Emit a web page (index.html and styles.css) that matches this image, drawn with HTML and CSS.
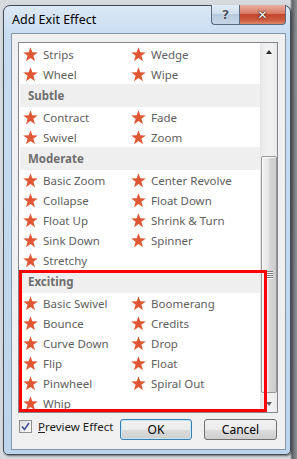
FILE: index.html
```html
<!DOCTYPE html>
<html lang="en">
<head>
    <meta charset="UTF-8">
    <title>Add Exit Effect</title>
    <link rel="stylesheet" href="styles.css">
</head>
<body>
    <svg class="defs" width="0" height="0">
        <symbol id="star" viewBox="0 0 14 14">
            <path d="M7 0.2 L8.7 5.0 L13.8 5.05 L9.7 8.15 L11.2 13.3 L7 10.3 L2.8 13.3 L4.3 8.15 L0.2 5.05 L5.3 5.0 Z"/>
        </symbol>
    </svg>

    <div class="window">
        <div class="titlebar">
            <span class="title">Add Exit Effect</span>
            <div class="caption-buttons">
                <span class="cap-btn help">?</span>
                <span class="cap-btn close">&#x2715;</span>
            </div>
        </div>

        <div class="client">
            <div class="listbox">
                <div class="list">
                    <div class="row">
                        <span class="item"><svg class="star"><use href="#star"/></svg>Strips</span>
                        <span class="item"><svg class="star"><use href="#star"/></svg>Wedge</span>
                    </div>
                    <div class="row">
                        <span class="item"><svg class="star"><use href="#star"/></svg>Wheel</span>
                        <span class="item"><svg class="star"><use href="#star"/></svg>Wipe</span>
                    </div>

                    <div class="group">Subtle</div>
                    <div class="row">
                        <span class="item"><svg class="star"><use href="#star"/></svg>Contract</span>
                        <span class="item"><svg class="star"><use href="#star"/></svg>Fade</span>
                    </div>
                    <div class="row">
                        <span class="item"><svg class="star"><use href="#star"/></svg>Swivel</span>
                        <span class="item"><svg class="star"><use href="#star"/></svg>Zoom</span>
                    </div>

                    <div class="group">Moderate</div>
                    <div class="row">
                        <span class="item"><svg class="star"><use href="#star"/></svg>Basic Zoom</span>
                        <span class="item"><svg class="star"><use href="#star"/></svg>Center Revolve</span>
                    </div>
                    <div class="row">
                        <span class="item"><svg class="star"><use href="#star"/></svg>Collapse</span>
                        <span class="item"><svg class="star"><use href="#star"/></svg>Float Down</span>
                    </div>
                    <div class="row">
                        <span class="item"><svg class="star"><use href="#star"/></svg>Float Up</span>
                        <span class="item"><svg class="star"><use href="#star"/></svg>Shrink &amp; Turn</span>
                    </div>
                    <div class="row">
                        <span class="item"><svg class="star"><use href="#star"/></svg>Sink Down</span>
                        <span class="item"><svg class="star"><use href="#star"/></svg>Spinner</span>
                    </div>
                    <div class="row">
                        <span class="item"><svg class="star"><use href="#star"/></svg>Stretchy</span>
                    </div>

                    <div class="group">Exciting</div>
                    <div class="row">
                        <span class="item"><svg class="star"><use href="#star"/></svg>Basic Swivel</span>
                        <span class="item"><svg class="star"><use href="#star"/></svg>Boomerang</span>
                    </div>
                    <div class="row">
                        <span class="item"><svg class="star"><use href="#star"/></svg>Bounce</span>
                        <span class="item"><svg class="star"><use href="#star"/></svg>Credits</span>
                    </div>
                    <div class="row">
                        <span class="item"><svg class="star"><use href="#star"/></svg>Curve Down</span>
                        <span class="item"><svg class="star"><use href="#star"/></svg>Drop</span>
                    </div>
                    <div class="row">
                        <span class="item"><svg class="star"><use href="#star"/></svg>Flip</span>
                        <span class="item"><svg class="star"><use href="#star"/></svg>Float</span>
                    </div>
                    <div class="row">
                        <span class="item"><svg class="star"><use href="#star"/></svg>Pinwheel</span>
                        <span class="item"><svg class="star"><use href="#star"/></svg>Spiral Out</span>
                    </div>
                    <div class="row">
                        <span class="item"><svg class="star"><use href="#star"/></svg>Whip</span>
                    </div>
                </div>

                <div class="scrollbar">
                    <div class="arrow"><span class="tri-up"></span></div>
                    <div class="track">
                        <div class="thumb"><span class="grip"></span></div>
                    </div>
                    <div class="arrow"><span class="tri-down"></span></div>
                </div>

                <div class="highlight"></div>
            </div>

            <div class="footer">
                <label class="preview">
                    <span class="checkbox">
                        <svg width="9" height="9" viewBox="0 0 9 9"><path d="M1 4.5 L3.5 7.5 L8 1" fill="none" stroke="#3d4f99" stroke-width="1.6"/></svg>
                    </span>
                    <span><u>P</u>review Effect</span>
                </label>
                <button class="btn default">OK</button>
                <button class="btn">Cancel</button>
            </div>
        </div>
    </div>
</body>
</html>
```

FILE: styles.css
```css
* {
    margin: 0;
    padding: 0;
    box-sizing: border-box;
}

body {
    width: 297px;
    height: 459px;
    overflow: hidden;
    padding: 5px 0 0 3px;
    background: linear-gradient(90deg, #d6d9dd 0, #d6d9dd 290px, #5f646a 292px, #8e9297 297px);
    font-family: "Segoe UI", "Noto Sans", sans-serif;
    font-size: 11.5px;
}

.defs {
    position: absolute;
}

.window {
    width: 288px;
    height: 450px;
    border: 1px solid #434c57;
    border-radius: 7px 7px 5px 5px;
    background: linear-gradient(180deg, #dbe8f5 0, #c8dcf0 30px, #bcd4ec 100%);
    box-shadow: 1px 1px 2px rgba(0, 0, 0, 0.5);
    display: flex;
    flex-direction: column;
    padding: 0 4px 4px 7px;
}

.titlebar {
    height: 27px;
    display: flex;
    justify-content: space-between;
    align-items: flex-start;
}

.title {
    margin: 6px 0 0 1px;
    line-height: 16px;
    font-size: 12.5px;
    color: #000;
}

.caption-buttons {
    display: flex;
    margin-top: -1px;
}

.cap-btn {
    height: 20px;
    display: flex;
    align-items: center;
    justify-content: center;
    border: 1px solid #5a6b80;
    border-top: none;
    font-family: "DejaVu Sans", sans-serif;
    font-weight: bold;
}

.help {
    width: 28px;
    border-right: none;
    border-radius: 0 0 0 4px;
    font-size: 13px;
    color: #4a5461;
    text-shadow: 0 0 1px #fff, 0 0 1px #fff;
    background: linear-gradient(180deg, #e4edf6 0, #d0deec 45%, #b7c9dc 50%, #c6d6e6 100%);
}

.close {
    width: 47px;
    border-radius: 0 0 4px 0;
    font-size: 12px;
    color: #fff;
    text-shadow: 0 0 1px #3a2420, 0 0 1px #3a2420, 0 0 2px #3a2420;
    background: linear-gradient(180deg, #eab0a2 0, #d97a62 45%, #c3472d 50%, #cd5a3e 80%, #e08a6c 100%);
}

.client {
    flex: 1;
    border: 1px solid #8797ab;
    background: #f0f0f0;
    padding: 8px 7px 0 6px;
    display: flex;
    flex-direction: column;
}

.listbox {
    position: relative;
    height: 371px;
    border: 1px solid #828790;
    background: #fff;
    display: flex;
}

.list {
    flex: 1;
    overflow: hidden;
    padding: 1px 0 0 1px;
}

.row {
    height: 20px;
    display: flex;
    align-items: center;
}

.item {
    width: 108px;
    display: flex;
    align-items: center;
    gap: 5px;
    padding-left: 3px;
    color: #606060;
    white-space: nowrap;
}

.star {
    width: 15px;
    height: 15px;
    fill: #df5733;
    flex-shrink: 0;
}

.group {
    height: 23px;
    display: flex;
    align-items: center;
    padding-left: 8px;
    background: #efefef;
    color: #6e6e6e;
    font-weight: bold;
}

.scrollbar {
    width: 17px;
    display: flex;
    flex-direction: column;
    border-left: 1px solid #e6e6e6;
    background: linear-gradient(90deg, #e9e9e9 0, #f1f1f1 30%, #f1f1f1 70%, #e9e9e9 100%);
}

.arrow {
    height: 17px;
    display: flex;
    align-items: center;
    justify-content: center;
}

.tri-up {
    border-left: 3.5px solid transparent;
    border-right: 3.5px solid transparent;
    border-bottom: 4px solid #2a2a2a;
}

.tri-down {
    border-left: 3.5px solid transparent;
    border-right: 3.5px solid transparent;
    border-top: 4px solid #606060;
}

.track {
    flex: 1;
}

.thumb {
    margin: 96px 0 0 0;
    height: 237px;
    border: 1px solid #979797;
    border-radius: 2px;
    box-shadow: inset 1px 1px 0 #fafafa;
    background: linear-gradient(90deg, #f3f3f3 0, #e6e6e6 45%, #d6d6d6 55%, #cbcbcb 100%);
    display: flex;
    align-items: center;
    justify-content: center;
}

.grip {
    width: 7px;
    height: 8px;
    background: repeating-linear-gradient(180deg, #7b7b7b 0 1px, #f6f6f6 1px 2px);
}

.highlight {
    position: absolute;
    left: 0;
    top: 227px;
    width: 248px;
    height: 142px;
    border: 3px solid #ff0000;
}

.footer {
    display: flex;
    align-items: flex-start;
    margin-top: 6px;
    padding-right: 1px;
}

.preview {
    display: flex;
    align-items: center;
    gap: 6px;
    margin: 0 auto 0 1px;
    color: #1e1e1e;
}

.checkbox {
    width: 13px;
    height: 13px;
    border: 1px solid #8e8f8f;
    background: linear-gradient(135deg, #dcdcdc, #ffffff);
    display: flex;
    align-items: center;
    justify-content: center;
}

.btn {
    width: 73px;
    height: 21px;
    border: 1px solid #707070;
    border-radius: 3px;
    background: linear-gradient(180deg, #f2f2f2 0, #ebebeb 50%, #dddddd 51%, #cfcfcf 100%);
    font: inherit;
    font-size: 12px;
    color: #000;
}

.btn.default {
    width: 72px;
    margin-right: 12px;
    border-color: #3c7fb1;
    box-shadow: inset 0 0 0 1px #c6e6f8;
}
```
